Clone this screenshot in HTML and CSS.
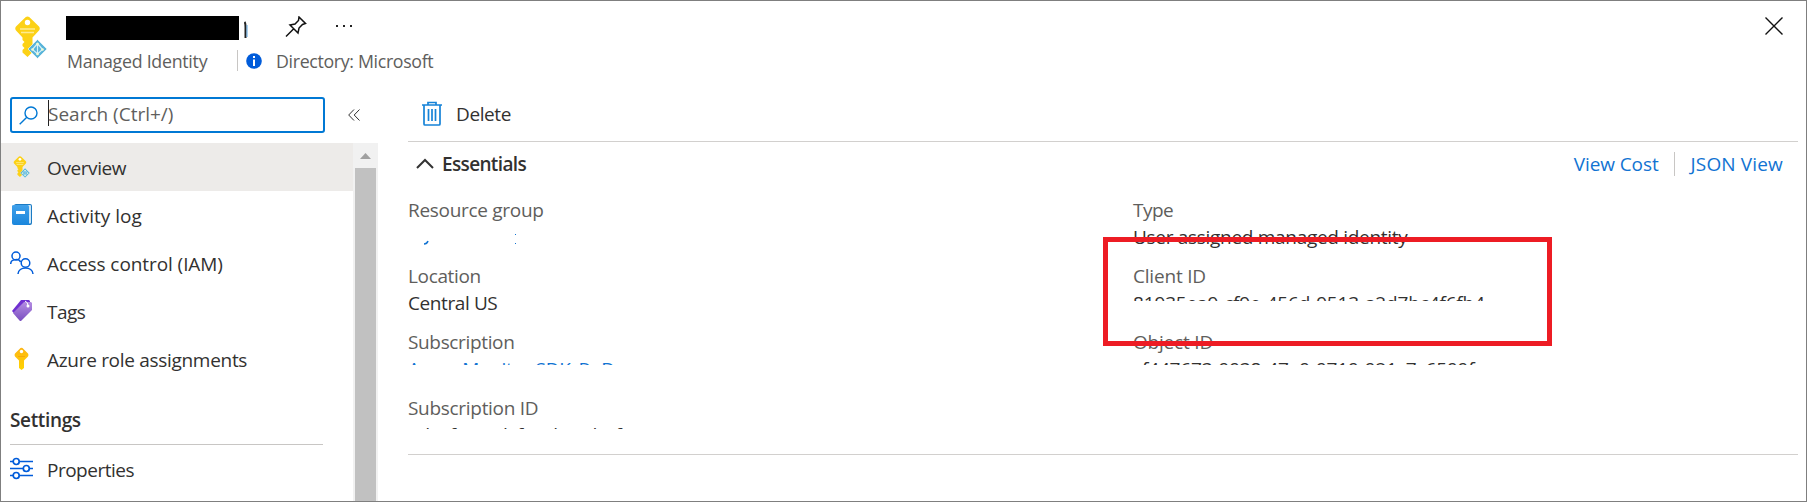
FILE: index.html
```html
<!DOCTYPE html>
<html lang="en">
<head>
<meta charset="utf-8">
<title>Managed Identity</title>
<link rel="stylesheet" href="styles.css">
</head>
<body>
<svg class="defs" width="0" height="0">
  <defs>
    <linearGradient id="book" x1="0" y1="0" x2="0" y2="1"><stop offset="0" stop-color="#3fa0ea"/><stop offset="1" stop-color="#1a86dc"/></linearGradient>
    <linearGradient id="tag" x1="0" y1="0" x2="0" y2="1"><stop offset="0" stop-color="#b48ce2"/><stop offset="1" stop-color="#7a4fc0"/></linearGradient>
    <linearGradient id="gold" x1="0" y1="0" x2="0" y2="1"><stop offset="0" stop-color="#fdb515"/><stop offset="1" stop-color="#ffd400"/></linearGradient>
    <symbol id="identity" viewBox="0 0 33 43">
      <path d="M10.500 1.200Q12.500-.3 14.500 1.200L24 10.500Q25.500 12.500 24 14.500L17.500 21.500V36L12.500 41L7.500 36.500V34L9.500 32L7.500 30V28L9.500 26L7.500 24V21.500L1 14.500Q-.5 12.500 1 10.500Z" fill="#fcd116"/>
      <circle cx="12.500" cy="6.500" r="2.700" fill="#fff"/>
      <path d="M5 13H20M6 16.500H19" stroke="#fdeb90" stroke-width="1.600"/>
      <path d="M22.500 23.500L32 33L22.500 42.500L13 33Z" fill="#59b4d9" stroke="#fff" stroke-width=".6"/>
      <path d="M22.500 27.500V39M22.500 27.500L17.500 33.500L22.500 38L27.500 33.500Z" fill="none" stroke="#d5f0fa" stroke-width="1.200"/>
      <circle cx="17.500" cy="33.500" r="1.300" fill="#f1fad0"/><circle cx="27.500" cy="33.500" r="1.300" fill="#f1fad0"/><circle cx="22.500" cy="28" r="1.300" fill="#f1fad0"/><circle cx="22.500" cy="38" r="1.300" fill="#f1fad0"/>
    </symbol>
  </defs>
</svg>
<div class="blade">
  <header class="header">
    <svg class="logo"><use href="#identity"/></svg>
    <div class="heading">
      <div class="title-row">
        <span class="redacted"></span>
        <svg class="stub" width="4" height="18"><path d="M.5 1Q1.500 2 1.500 6V17" fill="none" stroke="#222" stroke-width="2"/><path d="M3 4V16" stroke="#5aa5e0"/></svg>
        <svg class="pin" width="22" height="22" viewBox="0 0 22 22" fill="none" stroke="#111" stroke-width="1.500"><path d="M14 1L20.500 7.500L17.500 8.500L14 12L13 17L5 9L10 8L13.500 4.500ZM8.500 13L1 20.500"/></svg>
        <svg class="dots" width="18" height="4"><path d="M1 1H3V3H1ZM8 1H10V3H8ZM15 1H17V3H15Z" fill="#222"/></svg>
      </div>
      <div class="subtitle"><span class="kind">Managed Identity</span><svg class="info" width="16" height="16"><circle cx="8" cy="8" r="7.800" fill="#015cda"/><path d="M7 3H9V5H7ZM7 6.500H9V13H7Z" fill="#fff"/></svg><span class="directory">Directory: Microsoft</span></div>
    </div>
    <svg class="close" width="18" height="18"><path d="M.5.500L17.500 17.500M17.500.500L.5 17.500" stroke="#111" stroke-width="1.400"/></svg>
  </header>
  <div class="body">
    <aside class="side">
      <div class="search-row">
        <div class="search"><svg width="19" height="19" fill="none" stroke="#0078d4" stroke-width="1.400"><circle cx="12" cy="7" r="6"/><path d="M7.800 11.200L.7 18.300"/></svg><span class="placeholder">Search (Ctrl+/)</span></div>
        <svg class="collapse" width="12" height="12" fill="none" stroke="#333"><path d="M6 .5L.7 6L6 11.500M11.500.500L6.200 6L11.500 11.500"/></svg>
      </div>
      <div class="menu-wrap">
        <nav class="menu">
          <a class="item active"><svg class="ico" viewBox="0 0 24 24"><use href="#identity" x="3" y="1" width="18" height="22"/></svg><span class="t-overview">Overview</span></a>
          <a class="item"><svg class="ico" viewBox="0 0 24 24"><rect x="4" y="1" width="18" height="21" rx="2" fill="#1b7bc4"/><rect x="5" y="2" width="16" height="18.500" rx="1" fill="#cfe6f6"/><path d="M2 3Q2 2 4 2H17.500Q19 2 19 3.500V22H4Q2 22 2 20Z" fill="url(#book)"/><path d="M6 8H15V11H6Z" fill="#fff"/></svg><span class="t-activity">Activity log</span></a>
          <a class="item"><svg class="ico" viewBox="0 0 24 24" fill="none" stroke="#015cda" stroke-width="1.500"><circle cx="6" cy="5" r="4"/><path d="M.7 13C.7 7.500 9.500 7.500 10.500 11"/><circle cx="15.500" cy="12" r="4.300"/><path d="M8 23C8 15 23 15 23 23"/></svg><span class="t-access">Access control (IAM)</span></a>
          <a class="item"><svg class="ico" viewBox="0 0 24 24"><path d="M11 1H19L20 2V9L9 20L2 12Z" fill="#6f2fd0"/><path d="M14 3H21L22 4V11L11.500 21.500Q10.500 22.500 9.500 21.500L3 14Z" fill="url(#tag)"/><circle cx="18" cy="7" r="1.500" fill="#fff"/><path d="M15 2Q18 3 18 7" stroke="#fff" fill="none"/></svg><span class="t-tags">Tags</span></a>
          <a class="item"><svg class="ico" viewBox="0 0 24 24"><path d="M10.500 1Q11.500 .5 12.500 1L18 6.500Q19 8 18 9.500L14 13.500V21L11.500 23L9 21V13.500L5 9.500Q4 8 5 6.500Z" fill="url(#gold)"/><circle cx="11.500" cy="4.500" r="1.700" fill="#fff"/><path d="M8 9.500H15" stroke="#f7a80d"/></svg><span class="t-roles">Azure role assignments</span></a>
          <div class="group"><span class="t-settings">Settings</span></div>
          <a class="item props"><svg class="ico" viewBox="0 0 24 24" fill="none" stroke="#015cda" stroke-width="1.700"><path d="M0 4.500H3M9 4.500H23M0 11.500H13M19 11.500H23M0 18.500H3M9 18.500H23"/><circle cx="6.200" cy="4.500" r="3"/><circle cx="16.300" cy="11.500" r="3"/><circle cx="6.200" cy="18.500" r="3"/></svg><span class="t-properties">Properties</span></a>
        </nav>
        <div class="scrollbar"><svg width="25" height="25"><path d="M7 16L12.500 10L18 16Z" fill="#a0a0a0"/></svg><div class="thumb"></div></div>
      </div>
    </aside>
    <main class="main">
      <div class="toolbar"><svg width="20" height="25" fill="none" stroke="#1683d8" stroke-width="1.700"><path d="M0 4H20M6 4V1.500H14V4M2 4V23Q2 24 3 24H17Q18 24 18 23V4M6.500 8V20M10 8V20M13.500 8V20"/></svg><span class="t-delete">Delete</span></div>
      <div class="essentials"><svg width="18" height="11" fill="none" stroke="#333" stroke-width="2"><path d="M1 10L9 2L17 10"/></svg><b class="t-ess">Essentials</b><span class="links"><a class="t-cost">View Cost</a><a class="t-json">JSON View</a></span></div>
      <div class="details">
        <dl class="col">
          <dt><span class="t-rg">Resource group</span></dt><dd><svg class="scrap" width="120" height="24"><path d="M16 19Q19 19 20 16" fill="none" stroke="#1173d2" stroke-width="1.500"/><path d="M107 9H108V10H107ZM107 18H108V19H107Z" fill="#1173d2"/></svg></dd>
          <dt><span class="t-loc">Location</span></dt><dd><span class="t-central">Central US</span></dd>
          <dt><span class="t-sub">Subscription</span></dt><dd class="cut cut-sub"><a class="t-azmon">Azure Monitor SDK_RnD</a></dd>
          <dt><span class="t-subid">Subscription ID</span></dt><dd class="cut cut-subid"><span class="t-guid1">adcefaeacdcfeacbaedccf</span></dd>
        </dl>
        <dl class="col">
          <dt><span class="t-type">Type</span></dt><dd><span class="t-user">User assigned managed identity</span></dd>
          <dt><span class="t-client">Client ID</span></dt><dd class="cut cut-client"><span class="t-guid2">81935ea9-cf9e-456d-9513-a2d7bc4f6fb4</span></dd>
          <dt><span class="t-object">Object ID</span></dt><dd class="cut cut-obj"><span class="t-guid3">cf447673-9938-47e9-9719-921c7c6599f</span></dd>
        </dl>
        <div class="callout"></div>
      </div>
    </main>
  </div>
</div>
</body>
</html>
```
FILE: styles.css
```css
* { box-sizing: border-box; }
body { margin: 0; background: #fff; color: #323130; font: 19px/24px "Open Sans", "Noto Sans", sans-serif; }
.defs { position: absolute; }
svg { display: block; flex: none; }
span, a, b { white-space: nowrap; }
.blade { width: 1807px; height: 502px; border: 1px solid #7f7f7f; overflow: hidden; display: flex; flex-direction: column; }
.header { height: 90px; flex: none; display: flex; align-items: flex-start; }
.logo { width: 33px; height: 43px; margin: 15px 0 0 14px; }
.heading { margin: 15px 0 0 18px; flex: 1; }
.title-row { display: flex; height: 24px; align-items: flex-start; }
.redacted { width: 173px; height: 24px; background: #000; }
.stub { margin: 5px 0 0 5px; }
.pin { margin: 0 0 0 37px; }
.dots { margin: 8px 0 0 28px; }
.subtitle { display: flex; align-items: flex-start; height: 24px; margin-top: 10px; padding-left: 1px; color: #605e5c; font-size: 17.800px; line-height: 22px; letter-spacing: -.34px; }
.kind { width: 171px; height: 21px; border-right: 1px solid #c8c6c4; letter-spacing: -.27px; }
.info { margin: 3px 14px 0 8px; }
.close { margin: 16px 23px 0 0; }
.body { flex: 1; display: flex; min-height: 0; }
.side { width: 377px; display: flex; flex-direction: column; flex: none; }
.search-row { display: flex; align-items: center; height: 52px; flex: none; padding: 0 0 4px 9px; }
.search { width: 315px; height: 36px; border: 2px solid #0078d4; border-radius: 3px; display: flex; align-items: center; padding-left: 7px; color: #605e5c; }
.placeholder { margin: -4px 0 0 10px; border-left: 1px solid #222; height: 26px; line-height: 28px; text-indent: -1px; }
.collapse { margin-left: 23px; }
.menu-wrap { display: flex; flex: 1; min-height: 0; }
.menu { width: 352px; }
.item { display: flex; align-items: center; height: 48px; padding-left: 9px; gap: 13px; }
.item span { padding-top: 2px; }
.ico { width: 24px; height: 24px; }
.active { background: #edebe9; }
.group { height: 62px; width: 313px; margin-left: 9px; padding-top: 25px; border-bottom: 1px solid #c8c6c4; font-weight: 600; }
.scrollbar { width: 25px; background: #f1f1f1; }
.thumb { width: 21px; height: 400px; margin-left: 2px; background: #c1c1c1; }
.main { flex: 1; padding: 0 8px 0 30px; }
.toolbar { height: 51px; border-bottom: 1px solid #d2d0ce; display: flex; align-items: center; padding: 0 0 5px 14px; gap: 14px; }
.essentials { display: flex; align-items: center; height: 45px; padding: 0 15px 0 8px; gap: 8px; }
.essentials svg { margin-bottom: 3px; }
.essentials b { font-weight: 600; padding-bottom: 2px; }
.links { display: flex; margin-left: auto; color: #1173d2; padding-bottom: 1px; }
.links a + a { border-left: 1px solid #c8c6c4; margin-left: 15px; padding-left: 16px; }
.details { position: relative; height: 268px; border-bottom: 1px solid #d2d0ce; display: grid; grid-template-columns: 725px 1fr; }
.col { margin: 0; padding-top: 11px; }
dt { height: 27px; line-height: 24px; color: #605e5c; }
dd { margin: 0; height: 39px; line-height: 24px; }
dd a { color: #1173d2; }
.cut { overflow: hidden; }
.cut-sub, .cut-obj { height: 8px; margin-bottom: 31px; }
.cut-subid { height: 6px; margin-bottom: 33px; }
.cut-client { height: 10px; margin-bottom: 29px; }
.callout { position: absolute; left: 695px; top: 50px; width: 449px; height: 109px; border: 5px solid #ed1c24; }

/* Tracking per label */
.t-access { letter-spacing: -.08px; }
.t-guid2, .t-guid3 { letter-spacing: -.15px; }
.t-cost { letter-spacing: -.1px; }
.t-json { letter-spacing: .15px; }
.t-client, .t-object { letter-spacing: -.2px; }
.t-roles, .t-rg, .t-azmon, .t-user, .t-subid { letter-spacing: -.3px; }
.t-overview, .t-delete, .t-central { letter-spacing: -.4px; }
.t-settings, .t-loc, .t-sub { letter-spacing: -.35px; }
.t-guid1 { letter-spacing: -.1px; }
.t-tags, .t-properties, .t-type { letter-spacing: -.5px; }
.t-ess { letter-spacing: -.65px; }
```
